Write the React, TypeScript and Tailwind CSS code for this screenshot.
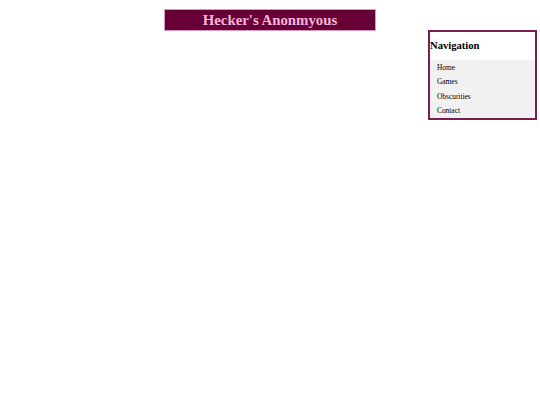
export default function App() {
  const links = ['Home', 'Games', 'Obscurities', 'Contact'];
  return (
    <div
      className="min-h-[405px] w-full bg-white pt-[9px]"
      style={{ fontFamily: '"Liberation Serif", "Times New Roman", serif' }}
    >
      <header className="mx-auto flex h-[22px] w-[212px] items-center justify-center border border-[#d99ac0] bg-[#660036]">
        <h1 className="text-[14.8px] font-bold leading-none text-[#f7b3d9]">Hecker's Anonmyous</h1>
      </header>

      <div className="-mt-px flex justify-end pr-[3px]">
        <nav className="w-[109px] border-2 border-[#7a1d50] bg-white">
          <h2 className="flex h-[28px] items-center text-[10.6px] font-bold text-black">Navigation</h2>
          <ul className="bg-[#f1f1f1]">
            {links.map((l) => (
              <li key={l} className="flex h-[14.5px] items-center pl-[7px] text-[7.4px] text-black">
                {l}
              </li>
            ))}
          </ul>
        </nav>
      </div>
    </div>
  );
}
